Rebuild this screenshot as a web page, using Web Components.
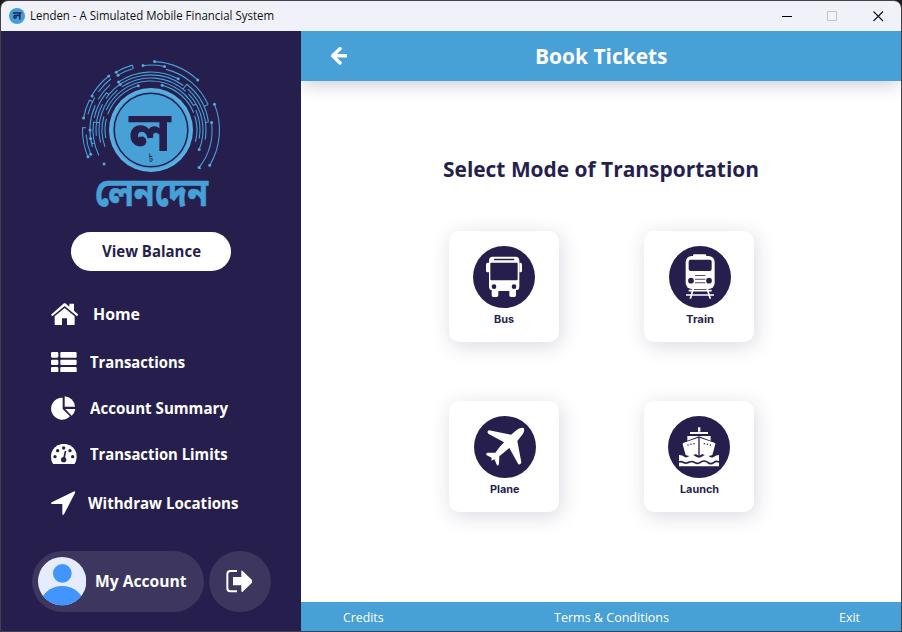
<!DOCTYPE html>
<html lang="en"><head><meta charset="utf-8"><title>Lenden</title>
<style>
html,body{margin:0;width:902px;height:632px;overflow:hidden;background:#1b1a1c}
body{font-family:"Open Sans","Noto Sans",sans-serif}
</style></head><body><lenden-app></lenden-app>
<script>
const define=(name,html,init)=>customElements.define(name,class extends HTMLElement{
  connectedCallback(){ if(this.shadowRoot)return; const r=this.attachShadow({mode:'open'});
    r.innerHTML=typeof html==='function'?html(this):html; if(init)init(this,r); }
});
// One line of text condensed or widened to a given width.
define('fit-text','<style>:host{display:block;white-space:nowrap;flex:none}span{display:inline-block;transform-origin:0 50%}</style><span><slot></slot></span>',(el,r)=>{
  const w=+el.getAttribute('w'),s=r.querySelector('span');
  el.style.width='max-content';
  const n=s.getBoundingClientRect().width; el.style.width=w+'px'; s.style.transform=`scaleX(${w/n})`;
});
const icons={
home:['64 234 82 67','<path d="M64 269 103 235Q105 234 107 235L119 245V236H133V257L146 269 142 274 105 243 68 274Z"/><path d="M75 274 105 249 135 274V298Q135 300 133 300H112V280H97V300H77Q75 300 75 298Z"/>'],
list:['62 377 77 62','<rect x="62" y="377" width="22" height="17" rx="4"/><rect x="90" y="377" width="49" height="17" rx="3"/><rect x="62" y="400" width="22" height="16" rx="4"/><rect x="90" y="400" width="49" height="16" rx="3"/><rect x="62" y="422" width="22" height="17" rx="4"/><rect x="90" y="422" width="49" height="17" rx="3"/>'],
pie:['62 45 74 73','<path d="M97 50V84L119 106A33 33 0 1 1 97 50Z"/><path d="M103 46A33 33 0 0 1 134 77H103Z"/><path d="M105 84H135A33 33 0 0 1 124 104Z"/>'],
gauge:['62 194 77 62','<path fill-rule="evenodd" d="M69 255Q62 245 62 232A38 38 0 0 1 139 232Q139 245 132 255Z"/><g fill="#261f4e"><circle cx="74" cy="232" r="5"/><circle cx="82" cy="214" r="5"/><circle cx="100" cy="206" r="5"/><circle cx="119" cy="214" r="5"/><circle cx="127" cy="232" r="5"/><circle cx="100" cy="241" r="8"/><path d="M98 238 103 216Q105 213 108 216L103 240Z"/></g>'],
arrow:['62 336 74 73','<path d="M132 337Q136 337 134 342L101 406Q98 410 96 405V375H65Q60 373 64 370Z"/>'],
bus:['42 33 330 234','<circle cx="207" cy="171" r="93" fill="#261f4e"/><path d="M172 110H243Q252 110 253 121V200Q253 207 248 210H243V226Q243 231 238 231H228Q223 231 223 226V213H190V226Q190 231 185 231H175Q170 231 170 226V210H166Q162 206 162 200V121Q163 110 172 110Z"/><path d="M162 128H157Q153 129 153 134V152Q153 157 158 157H162ZM253 128H257Q261 129 261 134V152Q261 157 256 157H253Z"/><g fill="#261f4e"><rect x="177" y="116" width="61" height="5" rx="2"/><rect x="166" y="128" width="82" height="53" rx="3"/><circle cx="177" cy="200" r="7"/><circle cx="237" cy="200" r="7"/></g>'],
train:['42 33 330 234','<circle cx="210" cy="171" r="93" fill="#261f4e"/><rect x="189" y="103" width="40" height="15" rx="4"/><rect x="167" y="108" width="87" height="99" rx="18"/><g fill="#261f4e"><rect x="176" y="119" width="69" height="34" rx="6"/><circle cx="183" cy="182" r="8.5"/><circle cx="237" cy="182" r="8.5"/><path opacity=".8" d="M195 165h31v3h-31zm0 11h31v3h-31zm0 11h31v3h-31z"/></g><path d="M190 205 181 236M231 205 241 236M176 212H245M168 225H252" fill="none" stroke="#fff" stroke-width="5"/>'],
plane:['42 33 330 234','<circle cx="210" cy="171" r="93" fill="#261f4e"/><path d="M266 114Q270 123 263 133L247 153 259 217Q258 225 250 223L223 174Q207 187 193 199L192 221Q190 229 186 226L178 208 169 212 170 203 155 196Q151 190 158 188L181 188Q192 172 207 157L160 131Q154 124 162 121L228 134 246 119Q258 111 266 114Z"/>'],
launch:['42 33 330 234','<circle cx="207" cy="171" r="93" fill="#261f4e"/><path d="M204 112h7v13h-7zM180 126h54v6h-54zM172 138h70v14l-35-13-35 13zM205 143V197Q197 190 190 195 181 201 167 195L158 163Q157 160 161 158ZM209 143V197Q217 190 224 195 233 201 247 195L256 163Q257 160 253 158Z"/><path d="M147 195Q158 195 164 201 170 204 177 199 188 191 196 199 207 207 218 199 226 191 237 199 245 206 252 200 258 195 267 195V229H147Z"/><path d="M147 216C157 211 160 221 170 219S182 211 191 216 203 222 211 217 226 211 233 217 247 221 252 217 262 214 267 216" fill="none" stroke="#261f4e" stroke-width="5"/><g fill="#261f4e"><circle cx="174" cy="165" r="2.3"/><circle cx="183" cy="163" r="2.3"/><circle cx="192" cy="161" r="2.3"/><circle cx="223" cy="161" r="2.3"/><circle cx="232" cy="163" r="2.3"/><circle cx="241" cy="165" r="2.3"/></g>'],
exit:['617 105 80 67','<path d="M650 108H630Q621 108 621 118V159Q621 169 630 169H650" fill="none" stroke="#fff" stroke-width="6"/><path d="M638 126H663V109Q664 105 667 108L696 136Q698 139 696 142L667 170Q664 172 663 168V151H638Z"/>'],
back:['92 59 50 53','<path d="M119 64 97 85.500 119 107M99 85.500H137" fill="none" stroke="#fff" stroke-width="10.500" stroke-linecap="round" stroke-linejoin="round"/>'],
avatar:['53 65 145 145','<clipPath id="c"><circle cx="125.500" cy="137.500" r="72.500"/></clipPath><g clip-path="url(#c)"><path fill="#e5ecff" d="M50 60h160v160H50z"/><circle cx="126" cy="114" r="28" fill="#4294ff"/><ellipse cx="125.500" cy="210" rx="66" ry="58" fill="#4294ff"/></g>']};
define('app-icon',el=>{const [vb,g]=icons[el.getAttribute('name')],[, ,w,h]=vb.split(' ');
  return `<style>:host{display:block;flex:none}svg{display:block}</style><svg width="${w/3}" height="${h/3}" viewBox="${vb}" fill="#fff">${g}</svg>`});

const P=(r,a)=>[(151+r*Math.sin(a*Math.PI/180)).toFixed(2),(130-r*Math.cos(a*Math.PI/180)).toFixed(2)];
const arc=(r,a,b)=>`M${P(r,a)}A${r} ${r} 0 0 1 ${P(r,b)}`;
define('lenden-logo',()=>{
  const arcs=[[68.5,-113,-88],[68.5,-80,-64],[68.5,-60,-38],[68.5,3,43],[68.5,68,121],[65,-7,12],[67.5,-31,-16],[64,-31,-16],[61,-106,-66],[61,-60,-42],[62.500,14,66],[61,83,128],[65,-112,-94],[65,-76,-60],[65,-54,-38],
  [58,-116,-82],[58,-78,-50],[58,-34,28],[58,38,82],[55,-96,-62],[55,-55,36],[55,42,100],[52,-104,-40],[52,-34,42],[52,46,112],[49,-110,-74],[49,-66,60],[49,66,100],[46,-100,-76],[46,-70,-16],[46,14,68],[46,72,105]];
  const links=[[-16,64,67.5],[-88,65,68.5],[-64,65,68.5],[-50,55,58],[38,52,58],[82,55,58],[-82,52,58],[128,61,63],[66,58,62.500],[60,49,52],[-103,58,61]];
  const dots=[[68.5,-113],[65,-112],[68.5,-80],[68.5,-38],[67.5,-31],[64,-31],[65,-7],[65,12],[68.5,3],[68.5,43],[68.5,68],[68.5,121],[61,128],[61,83],[58,28],[58,-34],[55,-34],[68,-60],[58,-126],[46,-16],[46,14],[52,112],[61,-90],[61,-98]];
  return `<style>:host{display:block;width:165px;height:170px}svg{display:block}text{font-family:"Noto Sans Bengali","Noto Serif Bengali","Lohit Bengali",FreeSans,sans-serif;font-weight:700}</style>
  <svg width="165" height="170" viewBox="70 50 165 170"><defs><radialGradient id="g"><stop offset=".85" stop-color="#47a0d6"/><stop offset="1" stop-color="#5fb4e4"/></radialGradient></defs>
  <path fill="none" stroke="#47a0d6" stroke-width="1.100" d="${arcs.map(a=>arc(...a)).join('')}${links.map(([a,r,s])=>`M${P(r,a)}L${P(s,a)}`).join('')}"/>
  ${dots.map(([r,a])=>{const p=P(r,a);return `<circle cx="${p[0]}" cy="${p[1]}" r="1.5" fill="#52aadd"/>`}).join('')}
  <circle cx="151" cy="130" r="42" fill="url(#g)"/><circle cx="151" cy="130" r="36.800" fill="none" stroke="#261f4e" stroke-width="1.500"/>
  <text transform="translate(0 150.500) scale(1 1.330)" fill="#261f4e"><tspan x="129" y="0" font-size="42" textLength="42" lengthAdjust="spacingAndGlyphs">ল</tspan><tspan x="148.500" y="8.500" font-size="8" font-weight="400">৳</tspan></text>
  <text transform="translate(95 205.500) scale(1 1.160)" font-size="34" fill="#47a0d6" stroke="#47a0d6" stroke-width=".5" textLength="113" lengthAdjust="spacingAndGlyphs">লেনদেন</text></svg>`});

define('title-bar',`<style>:host{display:flex;height:30px;background:#f1f2f9;align-items:center;padding:0 17px 0 8px;box-sizing:border-box;color:#111;font-size:12px}
fit-text{margin:-1px 0 0 5px}.c{margin-left:auto;display:block;margin-top:-1px}</style>
<svg width="16" height="16" viewBox="0 0 16 16"><circle cx="8" cy="8" r="8" fill="#439ed5"/><path d="M4 5H12.500M10.800 5V11.500M10 8Q8 6 7.200 8.500 6 6 5 8.500 5 10.500 7 10" fill="none" stroke="#261f4e" stroke-width="1.500"/></svg>
<fit-text w="244">Lenden - A Simulated Mobile Financial System</fit-text>
<svg class="c" width="102" height="12" viewBox="0 0 102 12" fill="none"><path d="M0 6.500H10" stroke="#000"/><rect x="45.500" y="1.500" width="9" height="9" stroke="#c3c3c8"/><path d="M91.500 1.500 101 11M101 1.500 91.500 11" stroke="#111" stroke-width="1.100"/></svg>`);

define('nav-item',el=>`<style>:host{display:flex;align-items:center;height:${el.getAttribute('h')}px}.i{flex:none;width:${el.getAttribute('tx')}px}</style><div class="i"><app-icon name="${el.getAttribute('icon')}"></app-icon></div><fit-text w="${el.getAttribute('w')}">${el.getAttribute('label')}</fit-text>`);

define('side-bar',`<style>:host{display:flex;flex-direction:column;width:300px;box-sizing:border-box;background:#261f4e;color:#fff;font-weight:700;font-size:15.200px;padding-top:19px}
lenden-logo{margin-left:69px}.b{width:160px;height:39px;border-radius:20px;background:#fff;color:#261f4e;margin:12px 0 0 70px;display:flex;align-items:center;justify-content:center;padding-bottom:1px;box-sizing:border-box}
nav{margin:19px 0 0 50px}.bottom{display:flex;gap:5px;margin:23px 0 0 31px}.p{display:flex;align-items:center;height:61px;border-radius:31px;background:#3d365f;box-sizing:border-box;width:172px;padding-left:6px;gap:9px}.p fit-text{margin-top:-2px}.o{width:62px;justify-content:center;padding:0 2px 0 0}</style>
<lenden-logo></lenden-logo><div class="b"><fit-text w="99">View Balance</fit-text></div>
<nav><nav-item h="48" icon="home" tx="41.500" w="47" label="Home"></nav-item><nav-item h="48" icon="list" tx="39" w="95" label="Transactions"></nav-item><nav-item h="44" icon="pie" tx="39" w="138" label="Account Summary"></nav-item><nav-item h="48" icon="gauge" tx="39" w="137.500" label="Transaction Limits"></nav-item><nav-item h="50" icon="arrow" tx="37" w="150.500" label="Withdraw Locations"></nav-item></nav>
<div class="bottom"><div class="p"><app-icon name="avatar"></app-icon><fit-text w="91.500">My Account</fit-text></div><div class="p o"><app-icon name="exit"></app-icon></div></div>`);

define('mode-card',el=>`<style>:host{display:flex;flex-direction:column;align-items:center;width:110px;height:111px;border-radius:10px;background:#fff;box-shadow:2px 4px 20px rgba(38,31,78,.17);color:#261f4e;font:700 10.500px/14px Inter,sans-serif}
fit-text{margin:4px 0 0 ${el.getAttribute('dx')}px}</style><app-icon name="${el.getAttribute('icon')}"></app-icon><fit-text w="${el.getAttribute('w')}">${el.getAttribute('label')}</fit-text>`);

define('main-view',`<style>:host{display:flex;flex-direction:column;flex:1;background:#fff;min-width:0;overflow:hidden}
header{height:50px;flex:none;background:#47a0d6;color:#fff;font-weight:700;font-size:22px;display:flex;align-items:center;padding-left:29.500px;box-shadow:0 5px 18px -2px rgba(38,31,78,.25);position:relative}
header fit-text{margin:-2px 0 0 188px}
.s{flex:1;display:flex;flex-direction:column}.s>fit-text{margin:72px 0 0 141.500px;font-size:22px;line-height:30px;font-weight:700;color:#261f4e}
.grid{display:grid;grid-template-columns:110px 110px;column-gap:85px;row-gap:59px;margin:48px 0 0 148px}
footer{height:29px;background:#47a0d6;color:#fff;font-size:13px;display:flex;align-items:center;justify-content:space-between;padding:0 41px 0 42px;box-sizing:border-box}</style>
<header><app-icon name="back"></app-icon><fit-text w="132.500">Book Tickets</fit-text></header>
<div class="s"><fit-text w="316">Select Mode of Transportation</fit-text><div class="grid"><mode-card icon="bus" label="Bus" w="20" dx="0"></mode-card><mode-card icon="train" label="Train" w="28" dx="2"></mode-card><mode-card icon="plane" label="Plane" w="29.500" dx="1"></mode-card><mode-card icon="launch" label="Launch" w="39" dx="0"></mode-card></div></div>
<footer><fit-text w="40.500">Credits</fit-text><fit-text w="115">Terms &amp; Conditions</fit-text><fit-text w="21">Exit</fit-text></footer>`);

define('lenden-app',`<style>:host{display:flex;flex-direction:column;width:902px;height:632px;box-sizing:border-box;border:1px solid #454149;border-radius:8px 8px 0 0;overflow:hidden}.r{display:flex;height:600px}</style><title-bar></title-bar><div class="r"><side-bar></side-bar><main-view></main-view></div>`);
</script></body></html>
